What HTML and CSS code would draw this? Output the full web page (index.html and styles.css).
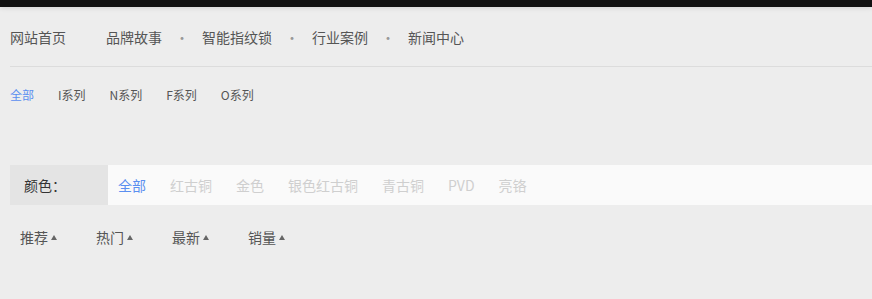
FILE: index.html
```html
<!DOCTYPE html>
<html lang="zh-CN">
<head>
  <meta charset="UTF-8" />
  <meta name="viewport" content="width=device-width, initial-scale=1.0"/>
  <title>产品中心</title>
  <link rel="stylesheet" href="styles.css">
</head>
<body>

<div class="topbar"></div>

<div class="wrap">

  <nav class="nav">
    <a href="#">网站首页</a>
    <span class="sep"></span>
    <a href="#">品牌故事</a>
    <span class="sep">·</span>
    <a href="#">智能指纹锁</a>
    <span class="sep">·</span>
    <a href="#">行业案例</a>
    <span class="sep">·</span>
    <a href="#">新闻中心</a>
  </nav>

  <ul class="series">
    <li class="on">全部</li>
    <li>I系列</li>
    <li>N系列</li>
    <li>F系列</li>
    <li>O系列</li>
  </ul>

  <div class="filter">
    <div class="filter-label">颜色：</div>
    <ul class="filter-list">
      <li class="on">全部</li>
      <li>红古铜</li>
      <li>金色</li>
      <li>银色红古铜</li>
      <li>青古铜</li>
      <li>PVD</li>
      <li>亮铬</li>
    </ul>
  </div>

  <ul class="sort">
    <li>推荐<i class="arrow"></i></li>
    <li>热门<i class="arrow"></i></li>
    <li>最新<i class="arrow"></i></li>
    <li>销量<i class="arrow"></i></li>
  </ul>

</div>

</body>
</html>
```

FILE: styles.css
```css
:root {
  --bg: #ededed;
  --text: #555;
  --blue: #5b8ff0;
  --muted: #cfcfcf;
}
* {
  box-sizing: border-box;
}
body {
  margin: 0;
  font-family: "Microsoft YaHei", "Noto Sans CJK SC", "Noto Sans", sans-serif;
  background: var(--bg);
  color: var(--text);
  overflow: hidden;
}
ul {
  list-style: none;
  margin: 0;
  padding: 0;
}
a {
  color: inherit;
  text-decoration: none;
}
.topbar {
  height: 7px;
  background: #111;
  box-shadow: 0 1px 5px rgba(0,0,0,0.12);
}
.wrap {
  padding-left: 10px;
}
.nav {
  display: flex;
  height: 60px;
  line-height: 60px;
  font-size: 14px;
  border-bottom: 1px solid #dcdcdc;
}
.nav .sep {
  width: 40px;
  text-align: center;
  color: #999;
}
.series {
  display: flex;
  gap: 24px;
  margin-top: 18px;
  line-height: 20px;
  font-size: 12px;
}
.series .on,
.filter-list .on {
  color: var(--blue);
}
.filter {
  display: flex;
  height: 40px;
  line-height: 40px;
  margin-top: 60px;
  font-size: 14px;
  background: #fafafa;
}
.filter-label {
  width: 98px;
  padding-left: 14px;
  background: #e4e4e4;
  color: #333;
}
.filter-list {
  display: flex;
  gap: 24px;
  padding-left: 10px;
  color: var(--muted);
}
.sort {
  display: flex;
  margin-top: 22px;
  padding-left: 10px;
  line-height: 20px;
  font-size: 14px;
}
.sort li {
  width: 76px;
  display: flex;
  align-items: center;
}
.arrow {
  display: inline-block;
  margin-left: 3px;
  border-left: 3.5px solid transparent;
  border-right: 3.5px solid transparent;
  border-bottom: 5px solid #666;
}
```
